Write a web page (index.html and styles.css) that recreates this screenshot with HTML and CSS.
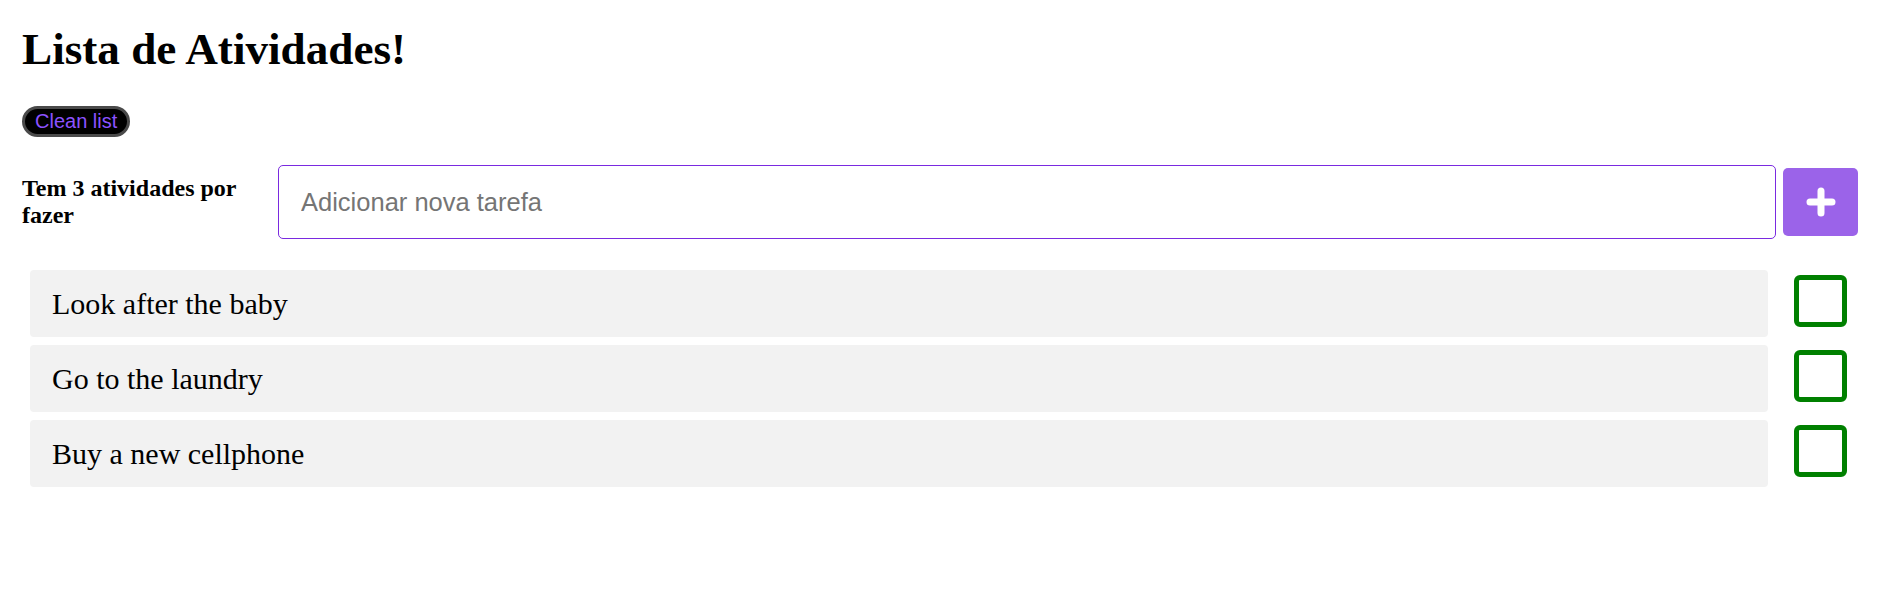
FILE: index.html
```html
<!DOCTYPE html>
<html lang="pt">
<head>
<meta charset="utf-8">
<title>Lista de Atividades</title>
<link rel="stylesheet" href="styles.css">
</head>
<body>
<div class="app">
  <h1 class="title">Lista de Atividades!</h1>
  <button class="clean-btn" type="button">Clean list</button>
  <div class="add-row">
    <label class="count" for="new-task">Tem 3 atividades por fazer</label>
    <input id="new-task" class="task-input" type="text" placeholder="Adicionar nova tarefa" autofocus>
    <button class="add-btn" type="button" aria-label="Adicionar">
      <svg width="30" height="30" viewBox="0 0 30 30"><path d="M15 4 V26 M4 15 H26" stroke="#fff" stroke-width="7" stroke-linecap="round" fill="none"/></svg>
    </button>
  </div>
  <ul class="tasks">
    <li class="task"><span class="task-text">Look after the baby</span><span class="check"></span></li>
    <li class="task"><span class="task-text">Go to the laundry</span><span class="check"></span></li>
    <li class="task"><span class="task-text">Buy a new cellphone</span><span class="check"></span></li>
  </ul>
</div>
</body>
</html>
```
FILE: styles.css
```css
html, body {
  margin: 0;
  padding: 0;
  background: #fff;
}
body {
  font-family: "Liberation Serif", "Times New Roman", serif;
  color: #000;
}
.app {
  padding: 0 24px 0 22px;
}
.title {
  font-size: 45.2px;
  line-height: 51px;
  font-weight: bold;
  margin: 24px 0 0;
}
.clean-btn {
  display: block;
  margin-top: 31px;
  height: 31px;
  padding: 0 10px;
  box-sizing: border-box;
  background: #000;
  color: #8c52ff;
  font-family: "Liberation Sans", Arial, sans-serif;
  font-size: 20px;
  line-height: 25px;
  border: 3px solid #4a4a4a;
  box-shadow: inset 0 0 2px #000;
  border-radius: 16px;
  cursor: pointer;
}
.add-row {
  display: flex;
  align-items: center;
  margin-top: 28px;
}
.count {
  width: 240px;
  margin-right: 16px;
  font-weight: bold;
  font-size: 24px;
  line-height: 27px;
  flex-shrink: 0;
}
.task-input {
  flex: 1;
  min-width: 0;
  height: 74px;
  box-sizing: border-box;
  border: 1.5px solid #7a2ae0;
  border-radius: 5px;
  padding: 0 22px;
  font-family: "Liberation Sans", Arial, sans-serif;
  font-size: 25.5px;
  outline: none;
  color: #000;
}
.task-input::placeholder {
  color: #757575;
}
.add-btn {
  margin-left: 7px;
  width: 75px;
  height: 68px;
  border: none;
  border-radius: 5px;
  background: #9b63e9;
  display: flex;
  align-items: center;
  justify-content: center;
  padding: 0;
  flex-shrink: 0;
  cursor: pointer;
}
.add-btn svg {
  display: block;
}
.tasks {
  list-style: none;
  margin: 31px 0 0 8px;
  padding: 0 11px 0 0;
  display: flex;
  flex-direction: column;
  gap: 8px;
}
.task {
  display: flex;
  align-items: flex-start;
  gap: 26px;
}
.task-text {
  flex: 1;
  height: 67px;
  display: flex;
  align-items: center;
  padding-left: 22px;
  background: #f2f2f2;
  border-radius: 4px;
  font-size: 30px;
}
.check {
  width: 53px;
  height: 52px;
  box-sizing: border-box;
  margin-top: 5px;
  border: 5px solid #008000;
  border-radius: 6px;
  flex-shrink: 0;
}
```
